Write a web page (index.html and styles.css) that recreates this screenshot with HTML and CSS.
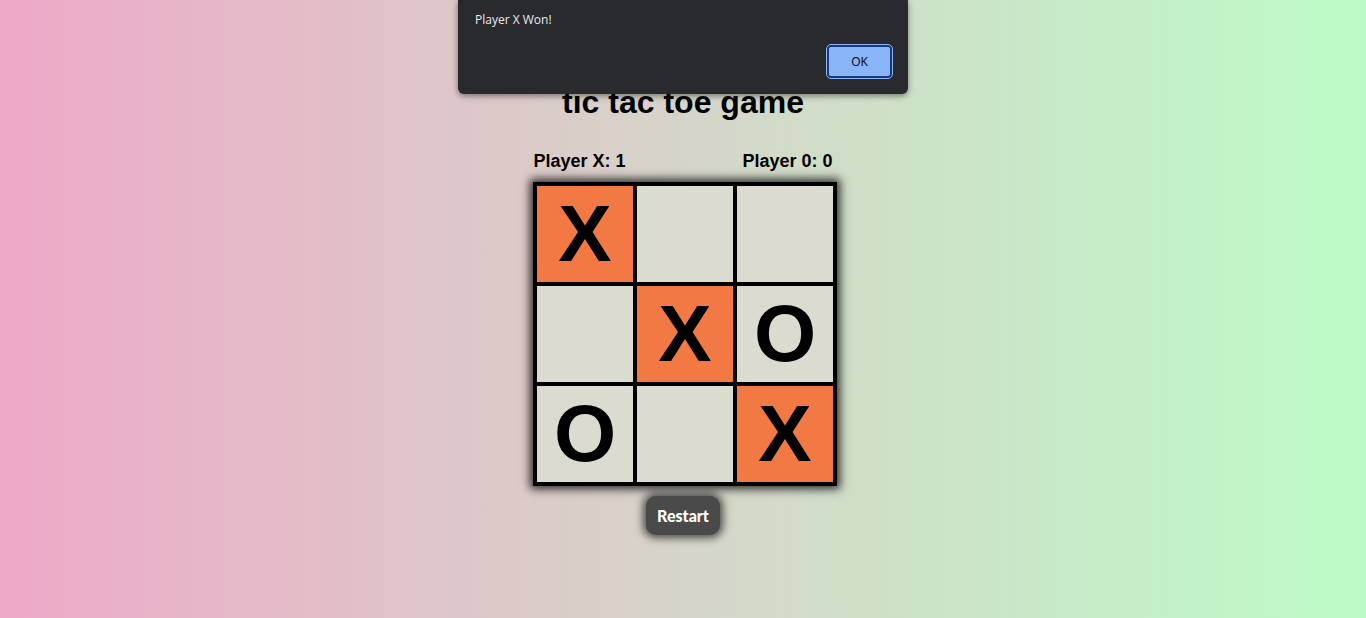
FILE: index.html
```html
<!DOCTYPE html>
<html lang="en">
<head>
<meta charset="utf-8">
<title>tic tac toe game</title>
<link rel="stylesheet" href="styles.css">
</head>
<body>
<main class="game">
  <h1 class="title">tic tac toe game</h1>
  <div class="scores">
    <span>Player X: 1</span>
    <span>Player 0: 0</span>
  </div>
  <div class="board">
    <div class="cell win">X</div>
    <div class="cell"></div>
    <div class="cell"></div>
    <div class="cell"></div>
    <div class="cell win">X</div>
    <div class="cell">O</div>
    <div class="cell">O</div>
    <div class="cell"></div>
    <div class="cell win">X</div>
  </div>
  <button class="restart">Restart</button>
</main>
<div class="alert">
  <p class="alert-msg">Player X Won!</p>
  <div class="alert-actions">
    <button class="alert-ok">OK</button>
  </div>
</div>
</body>
</html>
```

FILE: styles.css
```css
html, body {
  margin: 0;
  height: 100%;
}
body {
  background: linear-gradient(to right, #eea9c8, #d6d5c9 50%, #bcfbc7);
  font-family: "Liberation Sans", Arial, sans-serif;
  color: #000;
  overflow: hidden;
}
.game {
  display: flex;
  flex-direction: column;
  align-items: center;
  padding-top: 84px;
}
.title {
  margin: 0;
  font-size: 32px;
  font-weight: bold;
}
.scores {
  display: flex;
  justify-content: space-between;
  width: 299px;
  margin-top: 30px;
  font-size: 18px;
  font-weight: bold;
}
.board {
  display: grid;
  grid-template-columns: repeat(3, 100px);
  grid-template-rows: repeat(3, 100px);
  border: 2px solid #000;
  margin-top: 10px;
  margin-left: 4px;
  box-shadow: 0 0 9px 3px rgba(0, 0, 0, 0.8);
}
.cell {
  box-sizing: border-box;
  border: 2px solid #000;
  background: #dcdbd0;
  display: flex;
  align-items: center;
  justify-content: center;
  font-size: 80px;
  font-weight: bold;
  line-height: 1;
}
.cell.win {
  background: #f37944;
}
.restart {
  margin-top: 10px;
  padding: 10px 11px;
  border: none;
  border-radius: 10px;
  background: #4b4a4a;
  color: #fff;
  font-family: Lato, "Liberation Sans", sans-serif;
  font-size: 16px;
  font-weight: 900;
  box-shadow: 0 0 8px 3px rgba(0, 0, 0, 0.65);
  cursor: pointer;
}
.alert {
  position: absolute;
  left: 458px;
  top: 0;
  width: 450px;
  height: 94px;
  box-sizing: border-box;
  padding: 12px 16px 0 17px;
  background: #292a2d;
  border-radius: 0 0 6px 6px;
  box-shadow: 0 2px 6px rgba(0, 0, 0, 0.45);
  font-family: "Open Sans", "Noto Sans", sans-serif;
}
.alert-msg {
  margin: 0;
  color: #e8eaed;
  font-size: 12px;
  line-height: 16px;
}
.alert-actions {
  display: flex;
  justify-content: flex-end;
  margin-top: 17px;
}
.alert-ok {
  width: 65px;
  height: 33px;
  box-sizing: border-box;
  border: 2px solid #1a3a7a;
  outline: 1px solid #8ab4f8;
  border-radius: 4px;
  background: #8ab4f8;
  color: #000;
  font-family: "Open Sans", "Noto Sans", sans-serif;
  font-size: 12px;
}
```
